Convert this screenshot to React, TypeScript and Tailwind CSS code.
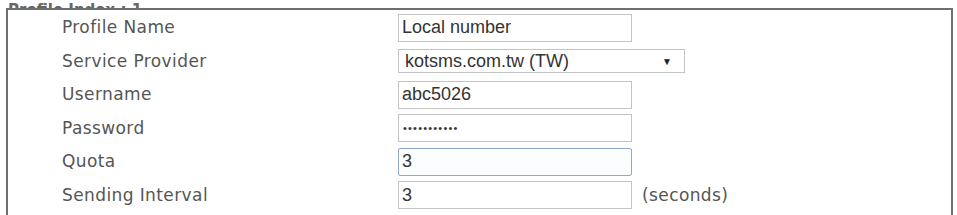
import React from "react";

const rows = [
  { label: "Profile Name", kind: "text", value: "Local number" },
  { label: "Service Provider", kind: "select", value: "kotsms.com.tw (TW)" },
  { label: "Username", kind: "text", value: "abc5026" },
  { label: "Password", kind: "password", value: "•••••••••••" },
  { label: "Quota", kind: "focus", value: "3" },
  { label: "Sending Interval", kind: "text", value: "3", suffix: "(seconds)" },
];

export default function App() {
  return (
    <div className="w-[957px] h-[215px] overflow-hidden bg-white relative">
      {/* section title, mostly clipped above the frame */}
      <div className="h-[8px] overflow-hidden relative">
        <div className="absolute left-[8px] bottom-[0px] leading-none font-bold text-[15px] text-[#666] font-['DejaVu_Sans',sans-serif] translate-y-[10px]">
          Profile Index : 1
        </div>
      </div>
      <div className="ml-[6px] w-[947px] h-[240px] border-2 border-[#6f6f6f] pt-[1px]">
        {rows.map((r) => (
          <div key={r.label} className="flex items-center h-[33.5px]">
            <div className="w-[390px] pl-[54px] text-[17px] tracking-[0.4px] text-[#555] font-['DejaVu_Sans',sans-serif]">
              {r.label}
            </div>
            {r.kind === "select" ? (
              <div className="w-[287px] h-[24px] border border-[#c4c4c4] flex items-center justify-between pl-[6px] pr-[12px] text-[18px] text-[#333] font-['Liberation_Sans',sans-serif]">
                <span>{r.value}</span>
                <span className="text-[10px] text-[#222]">▼</span>
              </div>
            ) : (
              <div
                className={
                  "w-[234px] h-[28px] flex items-center pl-[3px] text-[18px] text-[#333] font-['Liberation_Sans',sans-serif] " +
                  (r.kind === "focus"
                    ? "border border-[#8fa8d0] rounded-[2px] bg-[#fbfdff]"
                    : "border border-[#c4c4c4]")
                }
              >
                {r.kind === "password" ? (
                  <span className="text-[11px] tracking-[1.2px] pl-[1px]">{r.value}</span>
                ) : (
                  r.value
                )}
              </div>
            )}
            {r.suffix && (
              <span className="ml-[10px] text-[17px] tracking-[0.4px] text-[#555] font-['DejaVu_Sans',sans-serif]">
                {r.suffix}
              </span>
            )}
          </div>
        ))}
        <div className="mt-[3px] border-t border-[#e4e4e4]" />
      </div>
    </div>
  );
}
